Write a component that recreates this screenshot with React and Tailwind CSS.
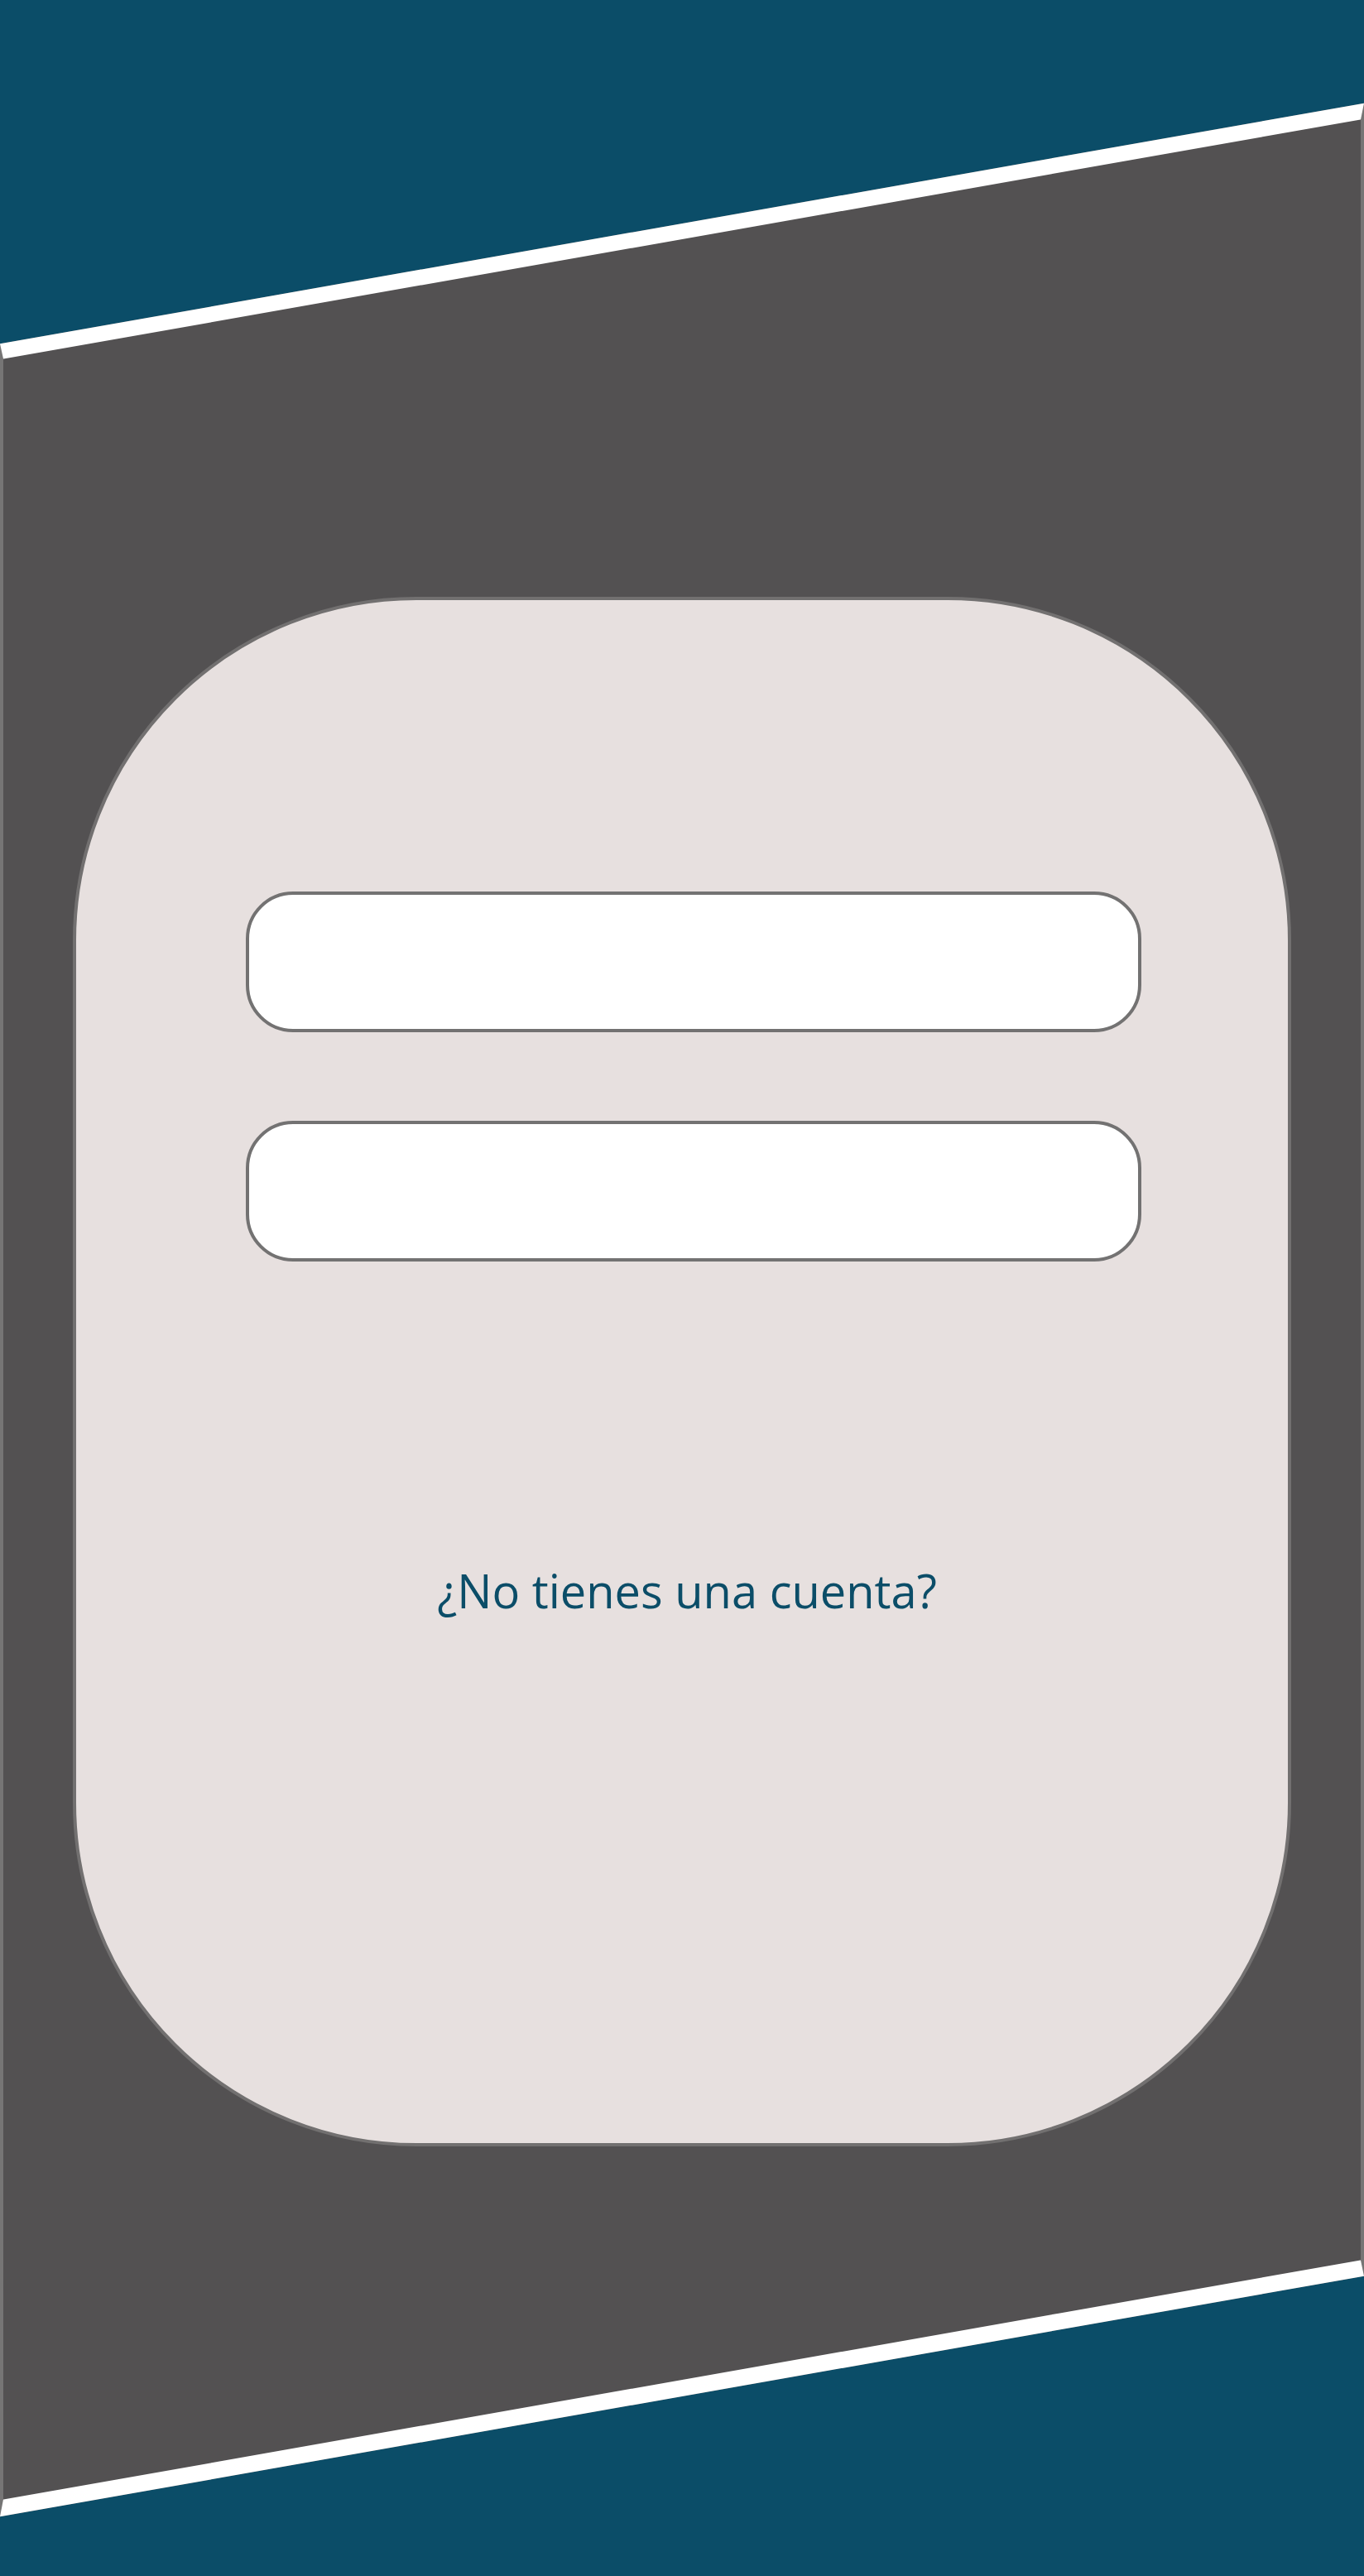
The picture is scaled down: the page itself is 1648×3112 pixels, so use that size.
import React from 'react';

// Login screen: blue page, slanted grey band, rounded card with two inputs
const Field = ({ type }) => (
    <input
        type={type}
        className="block w-[1082px] h-[170px] rounded-[57px] border-4 border-[#737272] bg-white outline-none"
    />
);

const App = () => {
    return (
        <div className="w-[1648px] h-[3112px] overflow-hidden bg-[#0b4d68] pt-[270px]">
            {/* slanted band */}
            <div className="-skew-y-10 h-[2625px] bg-[#535152] border-t-[19px] border-b-[20px] border-x-4 border-t-white border-b-white border-x-[#767575]">
                {/* undo the slant for the content */}
                <div className="skew-y-10 h-full pl-[84px] pt-[432px]">
                    <div className="w-[1472px] h-[1872px] rounded-[415px] border-4 border-[#727070] bg-[#e7e0df] pt-[352px] pl-[205px]">
                        <Field type="text" />
                        <div className="mt-[107px]">
                            <Field type="password" />
                        </div>
                        <p
                            className="mt-[369px] text-[56px] leading-none text-[#0b4d68] text-center w-[1066px]"
                            style={{ fontFamily: '"Open Sans", "Noto Sans", sans-serif' }}
                        >
                            ¿No tienes una cuenta?
                        </p>
                    </div>
                </div>
            </div>
        </div>
    );
};

export default App;
